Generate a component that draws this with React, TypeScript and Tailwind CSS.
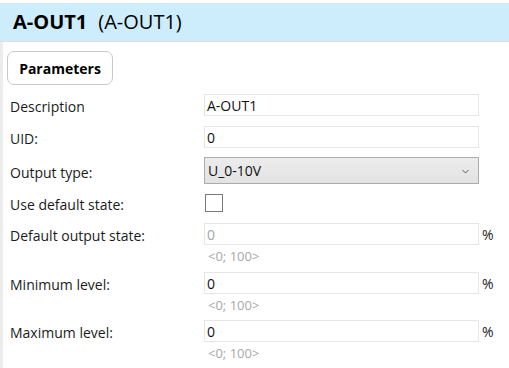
import React from "react";

const font = "font-['Open_Sans','Noto_Sans',sans-serif]";

// plain text box, as used on every row
const TextBox = ({ value, disabled }: { value: string; disabled?: boolean }) => (
  <div
    className={`h-[22px] w-[275px] border border-[#e6e6e6] bg-white px-[2px] flex items-center text-[14px] ${
      disabled ? "text-[#a3a3a3]" : "text-[#111]"
    }`}
  >
    {value}
  </div>
);

const Label = ({ children }: { children: React.ReactNode }) => (
  <div className="w-[194px] text-[14px] leading-[20px] text-[#1b1b1b] translate-y-[2px]">{children}</div>
);

const Row = ({ label, children, className = "" }: { label: string; children: React.ReactNode; className?: string }) => (
  <div className={`flex items-center pl-[3px] ${className}`}>
    <Label>{label}</Label>
    {children}
  </div>
);

// percent field with range hint underneath
const PercentRow = ({ label, value, disabled, className = "" }: { label: string; value: string; disabled?: boolean; className?: string }) => (
  <div className={className}>
    <Row label={label} className="h-[22px]">
      <TextBox value={value} disabled={disabled} />
      <span className="ml-[3px] text-[14px] text-[#1b1b1b]">%</span>
    </Row>
    <div className="pl-[201px] text-[13px] text-[#a8a8a8] leading-[16px] mt-[3px]">&lt;0; 100&gt;</div>
  </div>
);

export default function App() {
  return (
    <div className={`w-[509px] h-[368px] bg-white overflow-hidden ${font}`}>
      <div className="h-[3px]" />
      <div className="h-[39px] bg-[#cdedfc] border-b border-[#dedede] flex items-center pl-[13px] text-[20px] text-black">
        <span className="font-bold">A-OUT1</span>
        <span className="ml-[11px]">(A-OUT1)</span>
      </div>
      <div className="flex h-full">
        <div className="w-[3px] bg-[#ececec]" />
        <div className="flex-1 pl-[4px]">
          <button className="mt-[9px] h-[34px] w-[106px] rounded-[7px] border border-[#c9c9c9] bg-white text-[14px] font-bold text-black">
            Parameters
          </button>

          <Row label="Description" className="mt-[9px] h-[22px]">
            <TextBox value="A-OUT1" />
          </Row>
          <Row label="UID:" className="mt-[10px] h-[22px]">
            <TextBox value="0" />
          </Row>
          <Row label="Output type:" className="mt-[9px] h-[27px]">
            <div className="h-[27px] w-[275px] border border-[#acacac] bg-gradient-to-b from-[#ececec] to-[#e3e3e3] flex items-center justify-between pl-[3px] pr-[9px] text-[14px] text-[#111]">
              <span>U_0-10V</span>
              <svg width="7" height="5" viewBox="0 0 7 5" className="mt-[1px]">
                <polyline points="0.5,1 3.5,4 6.5,1" fill="none" stroke="#5a5a5a" strokeWidth="1" />
              </svg>
            </div>
          </Row>
          <Row label="Use default state:" className="mt-[10px] h-[18px]">
            <div className="ml-[1px] h-[18px] w-[18px] border border-[#7a7a7a] bg-white" />
          </Row>

          <PercentRow label="Default output state:" value="0" disabled className="mt-[11px]" />
          <PercentRow label="Minimum level:" value="0" className="mt-[8px]" />
          <PercentRow label="Maximum level:" value="0" className="mt-[7px]" />
        </div>
      </div>
    </div>
  );
}
